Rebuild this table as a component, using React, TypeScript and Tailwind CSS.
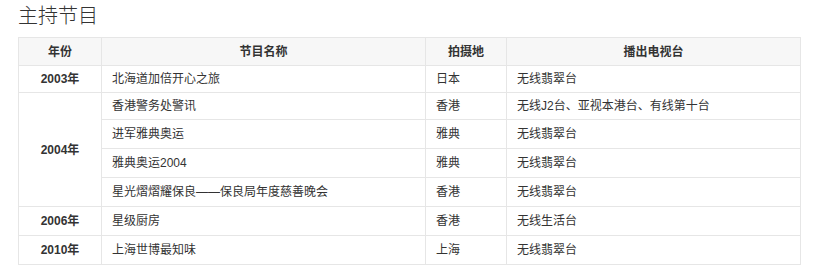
import React from "react";

type Row = {
  year?: string;
  span?: number;
  name: string;
  place: string;
  tv: string;
  h: string;
};

const rows: Row[] = [
  { year: "2003年", span: 1, name: "北海道加倍开心之旅", place: "日本", tv: "无线翡翠台", h: "h-[27px]" },
  { year: "2004年", span: 4, name: "香港警务处警讯", place: "香港", tv: "无线J2台、亚视本港台、有线第十台", h: "h-[27px]" },
  { name: "进军雅典奥运", place: "雅典", tv: "无线翡翠台", h: "h-[29px]" },
  { name: "雅典奥运2004", place: "雅典", tv: "无线翡翠台", h: "h-[29px]" },
  { name: "星光熠熠耀保良——保良局年度慈善晚会", place: "香港", tv: "无线翡翠台", h: "h-[29px]" },
  { year: "2006年", span: 1, name: "星级厨房", place: "香港", tv: "无线生活台", h: "h-[29px]" },
  { year: "2010年", span: 1, name: "上海世博最知味", place: "上海", tv: "无线翡翠台", h: "h-[29px]" },
];

const cell = "border border-[#e6e6e6] px-[10px] py-0 align-middle";

export default function App() {
  return (
    <div
      className="bg-white w-[824px] h-[274px] pl-[18px] pt-[3px] text-[#333]"
      style={{ fontFamily: '"Liberation Sans", Arial, "Noto Sans CJK SC", sans-serif' }}
    >
      <h2 className="text-[20px] leading-[26px] font-light text-[#333] mb-[8px]">主持节目</h2>
      <table className="border-collapse w-[782px] text-[12px] leading-[18px] table-fixed">
        <colgroup>
          <col className="w-[83px]" />
          <col className="w-[324px]" />
          <col className="w-[81px]" />
          <col className="w-[294px]" />
        </colgroup>
        <thead>
          <tr className="h-[28px] bg-[#f7f7f7]">
            <th className={`${cell} text-center font-bold`}>年份</th>
            <th className={`${cell} text-center font-bold`}>节目名称</th>
            <th className={`${cell} text-center font-bold`}>拍摄地</th>
            <th className={`${cell} text-center font-bold`}>播出电视台</th>
          </tr>
        </thead>
        <tbody>
          {rows.map((r, i) => (
            <tr key={i} className={r.h}>
              {r.year && (
                <td rowSpan={r.span} className={`${cell} text-center font-bold`}>
                  {r.year}
                </td>
              )}
              <td className={cell}>{r.name}</td>
              <td className={cell}>{r.place}</td>
              <td className={cell}>{r.tv}</td>
            </tr>
          ))}
        </tbody>
      </table>
    </div>
  );
}
